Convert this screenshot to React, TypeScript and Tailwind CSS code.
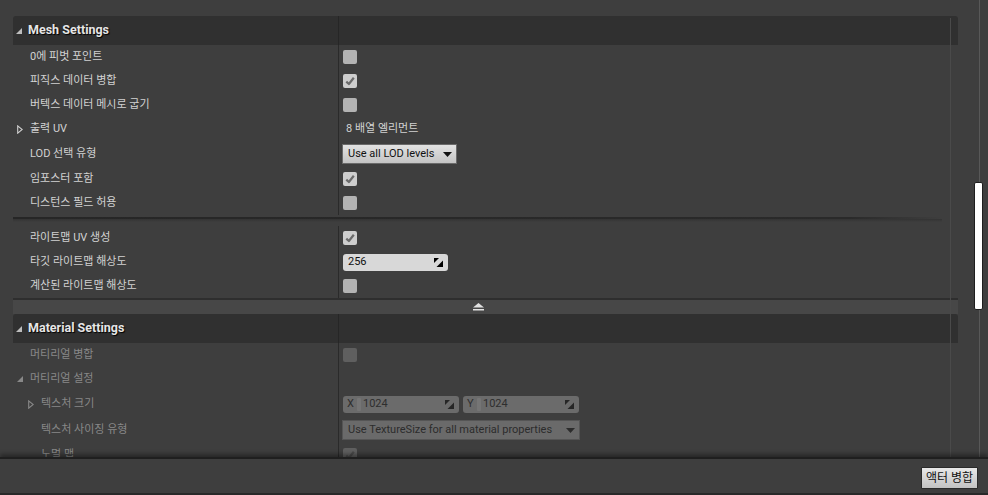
import React from "react";

const Tri = ({ color = "#c8c8c8" }: { color?: string }) => (
  <svg width="6" height="6" viewBox="0 0 6 6" className="shrink-0">
    <polygon points="6,0 6,6 0,6" fill={color} />
  </svg>
);

const Open = ({ color = "#c8c8c8" }: { color?: string }) => (
  <svg width="6" height="9" viewBox="0 0 6 9" className="shrink-0">
    <polygon points="0.7,0.8 5.2,4.5 0.7,8.2" fill="none" stroke={color} strokeWidth="1.1" />
  </svg>
);

const Check = ({ checked, disabled }: { checked?: boolean; disabled?: boolean }) => (
  <div
    className={`w-[14px] h-[14px] rounded-[2px] flex items-center justify-center ${
      disabled ? "bg-[#5f5f5f]" : checked ? "bg-[#cdcdcd]" : "bg-[#b3b3b3]"
    }`}
  >
    {checked && (
      <svg width="12" height="12" viewBox="0 0 12 12">
        <path
          d="M2.3 6.6 L4.9 9 L9.8 2.8"
          fill="none"
          stroke={disabled ? "#4a4a4a" : "#6a6a6a"}
          strokeWidth="2.2"
          strokeLinejoin="round"
        />
      </svg>
    )}
  </div>
);

const SpinIcon = ({ color }: { color: string }) => (
  <svg width="9" height="9" viewBox="0 0 9 9" className="shrink-0">
    <polygon points="0,0 5,0 0,5" fill={color} />
    <polygon points="9,2.5 9,9 2.5,9" fill={color} />
  </svg>
);

const DownArrow = ({ color }: { color: string }) => (
  <svg width="9" height="5" viewBox="0 0 9 5" className="shrink-0">
    <polygon points="0,0 9,0 4.5,5" fill={color} />
  </svg>
);

function Header({ title }: { title: string }) {
  return (
    <div className="h-[29px] flex bg-[#303030] rounded-t-[3px] w-[945px]">
      <div className="w-[325px] flex items-center pl-[3px] gap-[6px]">
        <Tri color="#bdbdbd" />
        <span className="text-[12.5px] font-bold text-[#e6e6e6] [text-shadow:1px_1px_1px_#000]">{title}</span>
      </div>
      <div className="flex-1 border-l border-[#262626]" />
    </div>
  );
}

function Row({
  label,
  children,
  tall,
  disabled,
  expander,
  indent,
}: {
  label: string;
  children?: React.ReactNode;
  tall?: boolean;
  disabled?: boolean;
  expander?: "open" | "tri";
  indent?: boolean;
}) {
  const c = disabled ? "#888888" : "#cfcfcf";
  return (
    <div className={`flex w-[945px] ${tall ? "h-[26px]" : "h-[24px]"}`}>
      <div className={`w-[325px] flex items-center ${indent ? "pl-[15px]" : "pl-[4px]"}`}>
        <div className="w-[13px] flex items-center">
          {expander === "open" && <Open color={c} />}
          {expander === "tri" && <Tri color={c} />}
        </div>
        <span className={`text-[11px] ${disabled ? "text-[#888888]" : "text-[#d2d2d2]"}`}>{label}</span>
      </div>
      <div className="flex-1 border-l border-[#2a2a2a] flex items-center pl-[4px]">{children}</div>
    </div>
  );
}

function Dropdown({ text, disabled, w }: { text: string; disabled?: boolean; w: string }) {
  return (
    <div
      className={`${w} h-[20px] -ml-[1px] flex items-center justify-between pl-[5px] pr-[4px] border text-[11px] ${
        disabled
          ? "bg-[#6a6a6a] border-[#555555] text-[#2c2c2c]"
          : "bg-gradient-to-b from-[#e2e2e2] to-[#c4c4c4] border-[#6a6a6a] text-[#111111]"
      }`}
    >
      <span>{text}</span>
      <DownArrow color={disabled ? "#2c2c2c" : "#111111"} />
    </div>
  );
}

function Spin({ value, axis, w, disabled }: { value: string; axis?: string; w: string; disabled?: boolean }) {
  const tc = disabled ? "text-[#2e2e2e]" : "text-[#111111]";
  return (
    <div
      className={`${w} h-[17px] rounded-[3px] flex items-center justify-between pl-[4px] pr-[5px] text-[11px] ${
        disabled ? "bg-[#6b6b6b]" : "bg-[#d8d8d8]"
      } ${tc}`}
    >
      <div className="flex items-center">
        {axis && (
          <>
            <span className="w-[10px]">{axis}</span>
            <span className="w-[4px] h-[13px] rounded-[1px] bg-[#757575] mr-[2px]" />
          </>
        )}
        <span className={axis ? "" : "pl-[1px]"}>{value}</span>
      </div>
      <SpinIcon color={disabled ? "#262626" : "#000000"} />
    </div>
  );
}

export default function App() {
  return (
    <div className="w-[988px] h-[495px] bg-[#3e3e3e] flex flex-col overflow-hidden font-['Roboto','Noto_Sans_CJK_KR',sans-serif]">
      <div className="h-[457px] shrink-0 flex overflow-hidden relative">
        <div className="w-[958px] shrink-0 pl-[13px] pt-[16px]">
          <Header title="Mesh Settings" />
          <Row label="0에 피벗 포인트">
            <Check />
          </Row>
          <Row label="피직스 데이터 병합">
            <Check checked />
          </Row>
          <Row label="버텍스 데이터 메시로 굽기">
            <Check />
          </Row>
          <Row label="출력 UV" expander="open">
            <span className="text-[11px] text-[#d2d2d2] pl-[3px]">8 배열 엘리먼트</span>
          </Row>
          <Row label="LOD 선택 유형" tall>
            <Dropdown text="Use all LOD levels" w="w-[115px]" />
          </Row>
          <Row label="임포스터 포함">
            <Check checked />
          </Row>
          <Row label="디스턴스 필드 허용">
            <Check />
          </Row>
          <div className="h-[11px] flex flex-col pt-[2px]">
            <div className="w-[929px] h-[2px] bg-gradient-to-r from-[#262626] via-[#2a2a2a] via-90% to-transparent" />
            <div className="w-[929px] h-[3px] bg-gradient-to-b from-[#333333] to-transparent" />
          </div>
          <Row label="라이트맵 UV 생성">
            <Check checked />
          </Row>
          <Row label="타깃 라이트맵 해상도">
            <Spin value="256" w="w-[105px]" />
          </Row>
          <Row label="계산된 라이트맵 해상도">
            <Check />
          </Row>
          <div className="w-[945px] h-[16px] border-t-[2px] border-[#2e2e2e] bg-[#474747] flex items-center justify-center pr-[14px]">
            <svg width="11" height="8" viewBox="0 0 11 8">
              <polygon points="5.5,0 11,4.5 0,4.5" fill="#e2e2e2" />
              <rect x="0" y="6" width="11" height="1.5" fill="#e2e2e2" />
            </svg>
          </div>
          <Header title="Material Settings" />
          <Row label="머티리얼 병합" disabled>
            <Check disabled />
          </Row>
          <Row label="머티리얼 설정" disabled expander="tri" />
          <Row label="텍스처 크기" disabled expander="open" indent tall>
            <div className="flex gap-[4px]">
              <Spin value="1024" axis="X" w="w-[116px]" disabled />
              <Spin value="1024" axis="Y" w="w-[116px]" disabled />
            </div>
          </Row>
          <Row label="텍스처 사이징 유형" disabled indent tall>
            <Dropdown text="Use TextureSize for all material properties" w="w-[238px]" disabled />
          </Row>
          <Row label="노멀 맵" disabled indent>
            <Check checked disabled />
          </Row>
        </div>
        <div className="absolute left-[950px] top-[18px] bottom-0 w-px bg-[#4a4a4a]" />
        <div className="w-[30px] shrink-0 relative">
          <div className="absolute left-[21px] top-0 bottom-0 w-px bg-[#585858]" />
          <div className="absolute left-[16px] top-[182px] w-[9px] h-[128px] bg-white border border-[#1e1e1e] rounded-[2px]" />
        </div>
      </div>
      <div className="relative shrink-0 h-[36px] border-t-[2px] border-[#1f1f1f] bg-[#3e3e3e] shadow-[0_-3px_4px_rgba(0,0,0,0.35)] flex justify-end items-start pt-[8px] pr-[10px]">
        <button className="h-[22px] w-[57px] border border-[#2a2a2a] rounded-[1px] bg-gradient-to-b from-[#e8e8e8] to-[#c2c2c2] text-[12px] text-[#111111] flex items-center justify-center">
          액터 병합
        </button>
      </div>
      <div className="h-[2px] shrink-0 bg-[#2a2a2a]" />
    </div>
  );
}
